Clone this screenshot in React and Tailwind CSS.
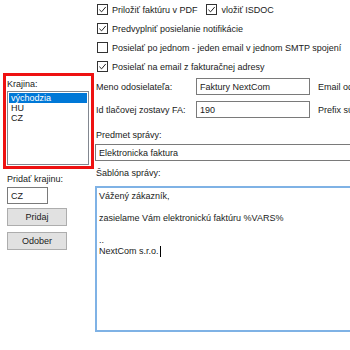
import React from 'react';

function Check({ checked }) {
  return (
    <span className="flex h-[11px] w-[11px] shrink-0 items-center justify-center border border-[#333333] bg-white">
      {checked ? (
        <svg viewBox="0 0 10 10" className="h-[9px] w-[9px]">
          <path d="M1.5 5.2 L4 7.6 L8.6 2.2" fill="none" stroke="#222" strokeWidth="1.1" />
        </svg>
      ) : null}
    </span>
  );
}

function CheckRow({ checked, label, children }) {
  return (
    <div className="flex h-[19px] items-center whitespace-nowrap">
      <Check checked={checked} />
      <span className="ml-[4px]">{label}</span>
      {children}
    </div>
  );
}

function Field({ value, className }) {
  return (
    <div className={`flex h-[17px] shrink-0 items-center border border-[#7a7a7a] bg-white px-[3px] ${className}`}>
      {value}
    </div>
  );
}

function Button({ label }) {
  return (
    <div className="flex h-[18px] w-[60px] items-center justify-center border border-[#adadad] bg-[#e1e1e1]">{label}</div>
  );
}

export default function App() {
  return (
    <div className="flex h-[350px] w-[350px] overflow-hidden bg-white text-[9px] leading-[12px] text-[#1a1a1a]" style={{ fontFamily: '"Liberation Sans", Arial, sans-serif' }}>
      <div className="flex w-[95px] shrink-0 flex-col pt-[73px]">
        <div className="ml-[3px] flex h-[96px] w-[91px] flex-col border-[3px] border-[#ee1111] px-[1px]">
          <div className="mt-[1px] h-[14px] leading-[14px]">Krajina:</div>
          <div className="flex h-[74px] w-[82px] flex-col border border-[#828790] p-[1px]">
            <div className="bg-[#0078d7] pl-[2px] leading-[10px] text-white">východzia</div>
            <div className="pl-[2px] leading-[10px]">HU</div>
            <div className="pl-[2px] leading-[10px]">CZ</div>
          </div>
        </div>
        <div className="ml-[7px] mt-[4px] leading-[12px]">Pridať krajinu:</div>
        <Field value="CZ" className="ml-[7px] mt-[2px] w-[41px]" />
        <div className="ml-[7px] mt-[4px] flex flex-col gap-[6px]">
          <Button label="Pridaj" />
          <Button label="Odober" />
        </div>
      </div>
      <div className="flex min-w-0 flex-1 flex-col">
        <div className="ml-[2px]">
          <CheckRow checked label="Priložiť faktúru v PDF">
            <span className="ml-[9px]">
              <Check checked />
            </span>
            <span className="ml-[4px]">vložiť ISDOC</span>
          </CheckRow>
          <CheckRow checked label="Predvyplniť posielanie notifikácie" />
          <CheckRow checked={false} label="Posielať po jednom - jeden email v jednom SMTP spojení" />
          <CheckRow checked label="Posielať na email z fakturačnej adresy" />
        </div>
        <div className="mt-[2px] flex items-center whitespace-nowrap">
          <span className="ml-[1px] w-[100px] shrink-0">Meno odosielateľa:</span>
          <Field value="Faktury NextCom" className="w-[114px]" />
          <span className="ml-[8px]">Email od</span>
        </div>
        <div className="mt-[6px] flex items-center whitespace-nowrap">
          <span className="ml-[1px] w-[100px] shrink-0">Id tlačovej zostavy FA:</span>
          <Field value="190" className="w-[114px]" />
          <span className="ml-[8px]">Prefix sú</span>
        </div>
        <div className="ml-[1px] mt-[11px] leading-[12px]">Predmet správy:</div>
        <Field value="Elektronicka faktura" className="mt-[3px] w-[270px]" />
        <div className="ml-[1px] mt-[6px] leading-[12px]">Šablóna správy:</div>
        <div className="mt-[7px] h-[146px] w-[270px] shrink-0 border-2 border-[#7fb2e5] px-[2px] pt-[3px] leading-[11px]">
          <div>Vážený zákazník,</div>
          <div>&nbsp;</div>
          <div>zasielame Vám elektronickú faktúru %VARS%</div>
          <div>&nbsp;</div>
          <div>..</div>
          <div className="flex items-center">
            NextCom s.r.o.<span className="ml-[1px] inline-block h-[11px] w-[1px] bg-black" />
          </div>
        </div>
      </div>
    </div>
  );
}
